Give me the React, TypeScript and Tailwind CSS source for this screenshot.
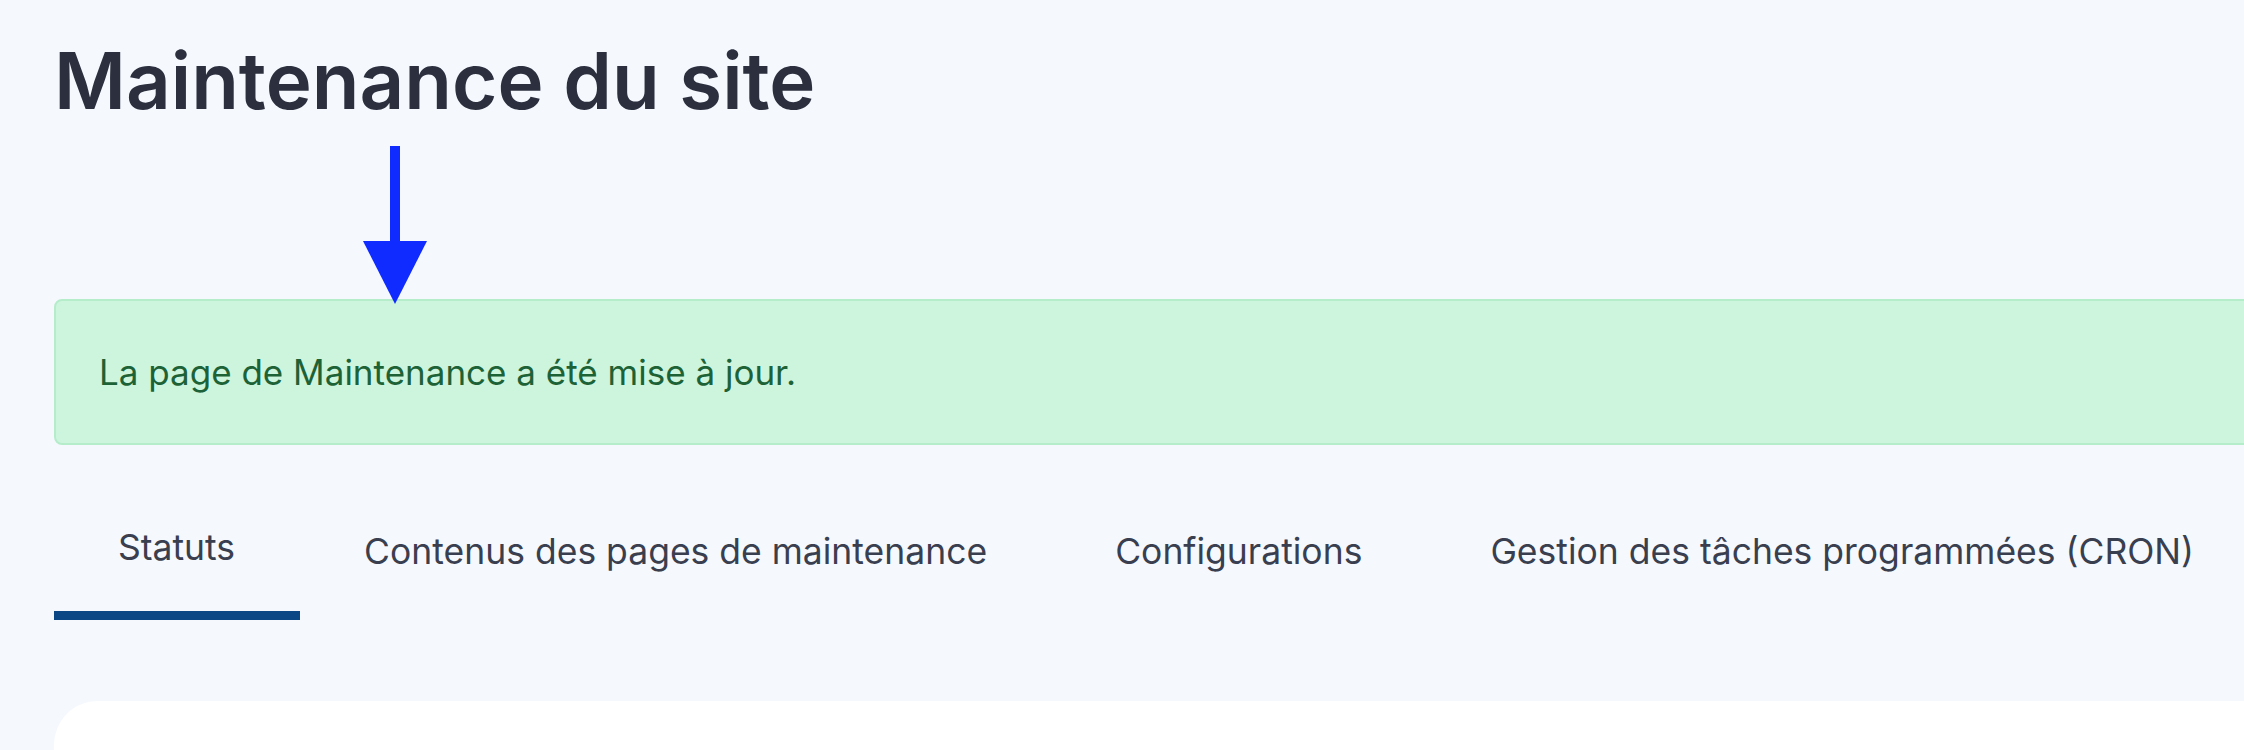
export default function App() {
  const tabs = [
    "Statuts",
    "Contenus des pages de maintenance",
    "Configurations",
    "Gestion des tâches programmées (CRON)",
  ];

  return (
    <div className="min-h-screen w-full overflow-hidden bg-[#f5f9fe] font-['Inter',sans-serif]">
      <div className="relative w-[2400px] pl-[54px] pt-[42px]">
        {/* Title */}
        <h1 className="text-[78px] font-semibold leading-none text-[#2b2f3e]">
          Maintenance du site
        </h1>

        {/* Annotation arrow */}
        <svg
          className="absolute left-[363px] top-[146px]"
          width="64"
          height="158"
          viewBox="0 0 64 158"
        >
          <rect x="27" y="0" width="10" height="98" fill="#0f2bff" />
          <polygon points="0,95 64,95 32,158" fill="#0f2bff" />
        </svg>

        {/* Success alert */}
        <div className="mt-[179px] flex h-[146px] items-center rounded-lg border-2 border-[#b5ecca] bg-[#cdf5de] px-[43px]">
          <p className="text-[35px] leading-none text-[#1d6236]">
            La page de Maintenance a été mise à jour.
          </p>
        </div>

        {/* Tabs */}
        <div className="mt-[85px] flex items-end">
          {tabs.map((t, i) => (
            <div
              key={t}
              className={
                i === 0
                  ? "border-b-[9px] border-[#0b4785] pl-[64px] pr-[65px] pb-[45px]"
                  : "border-b-[5px] border-transparent px-[64px] pb-[45px]"
              }
            >
              <span className="block text-[35.5px] leading-none text-[#3a3f4f]">
                {t}
              </span>
            </div>
          ))}
        </div>

        {/* Content card */}
        <div className="mt-[81px] h-[200px] rounded-tl-[44px] bg-white" />
      </div>
    </div>
  );
}
